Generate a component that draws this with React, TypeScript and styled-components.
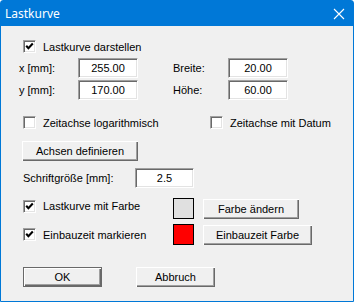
import React from 'react';
import styled, { createGlobalStyle } from 'styled-components';

const GlobalStyle = createGlobalStyle`
  html, body {
    margin: 0;
    padding: 0;
    background: #ffffff;
  }
  body {
    font-family: "Liberation Sans", Arial, sans-serif;
    font-size: 11px;
    color: #000000;
  }
`;

const Window = styled.div`
  width: 354px;
  height: 302px;
  box-sizing: border-box;
  border: 1px solid #0078d7;
  border-radius: 3px 3px 0 0;
  background: #f0f0f0;
  display: flex;
  flex-direction: column;
`;

const TitleBar = styled.div`
  height: 25px;
  flex: none;
  background: #0078d7;
  display: flex;
  align-items: center;
  justify-content: space-between;
  padding: 0 8px 0 4px;
  color: #ffffff;
  font-family: "Noto Sans", "Open Sans", sans-serif;
  font-size: 12px;
`;

const CloseIcon = () => (
  <svg width="12" height="12" viewBox="0 0 12 12">
    <path d="M1 1 L11 11 M11 1 L1 11" stroke="#ffffff" strokeWidth="1.1" fill="none" />
  </svg>
);

const Content = styled.div`
  padding: 14px 0 0 22px;
  display: flex;
  flex-direction: column;
`;

const Row = styled.div<{ $top?: number; $height?: number; $shift?: number }>`
  display: flex;
  align-items: center;
  height: ${p => p.$height ?? 20}px;
  margin-top: ${p => p.$top ?? 0}px;
  margin-left: ${p => p.$shift ?? 0}px;
`;

const CheckItem = styled.label<{ $width?: number; $lift?: number }>`
  display: flex;
  align-items: center;
  gap: 7px;
  width: ${p => (p.$width ? `${p.$width}px` : 'auto')};
  margin-top: ${p => -(p.$lift ?? 0)}px;
  white-space: nowrap;
`;

const Box = styled.span`
  width: 13px;
  height: 13px;
  box-sizing: border-box;
  flex: none;
  background: #ffffff;
  border-top: 1px solid #a0a0a0;
  border-left: 1px solid #a0a0a0;
  border-right: 1px solid #ffffff;
  border-bottom: 1px solid #ffffff;
  box-shadow: inset 1px 1px 0 #696969, inset -1px -1px 0 #e3e3e3;
  display: flex;
  align-items: center;
  justify-content: center;
`;

const Check = ({ checked }: { checked?: boolean }) => (
  <Box>
    {checked ? (
      <svg width="9" height="9" viewBox="0 0 9 9">
        <path d="M1.2 3.8 L3.4 6.2 L7.8 1.6" stroke="#000" strokeWidth="2.1" fill="none" />
      </svg>
    ) : null}
  </Box>
);

const Label = styled.span<{ $width: number }>`
  width: ${p => p.$width}px;
  flex: none;
  white-space: nowrap;
`;

const Field = styled.div<{ $width?: number }>`
  width: ${p => p.$width ?? 60}px;
  height: 20px;
  box-sizing: border-box;
  flex: none;
  background: #ffffff;
  border-top: 1px solid #a0a0a0;
  border-left: 1px solid #a0a0a0;
  border-right: 1px solid #ffffff;
  border-bottom: 1px solid #ffffff;
  box-shadow: inset 1px 1px 0 #696969, inset -1px -1px 0 #e3e3e3;
  display: flex;
  align-items: center;
  justify-content: center;
  font-size: 11px;
`;

const Spacer = styled.div<{ $width: number }>`
  width: ${p => p.$width}px;
  flex: none;
`;

const Button = styled.button<{ $width: number; $default?: boolean }>`
  width: ${p => p.$width}px;
  height: 20px;
  box-sizing: border-box;
  flex: none;
  padding: 0;
  background: #f0f0f0;
  font-family: "Liberation Sans", Arial, sans-serif;
  font-size: 11px;
  color: #000;
  border: ${p => (p.$default ? '1px solid #696969' : 'none')};
  box-shadow: inset 1px 1px 0 #ffffff, inset -1px -1px 0 #696969, inset -2px -2px 0 #a0a0a0;
  outline: none;
`;

const Swatch = styled.div<{ $color: string }>`
  width: 21px;
  height: 21px;
  box-sizing: border-box;
  flex: none;
  border: 1px solid #000;
  background: ${p => p.$color};
  margin-right: 9px;
`;

const ColorRows = styled.div`
  display: grid;
  grid-template-columns: 150px auto 1fr;
  grid-template-rows: 21px 21px;
  row-gap: 5px;
  align-items: center;
  justify-items: start;
  margin-top: 10px;
`;

export default function App() {
  return (
    <>
      <GlobalStyle />
      <Window>
        <TitleBar>
          <span>Lastkurve</span>
          <CloseIcon />
        </TitleBar>
        <Content>
          <Row $height={13}>
            <CheckItem>
              <Check checked />
              Lastkurve darstellen
            </CheckItem>
          </Row>
          <Row $top={5} $shift={-4}>
            <Label $width={59}>x [mm]:</Label>
            <Field>255.00</Field>
            <Spacer $width={35} />
            <Label $width={55}>Breite:</Label>
            <Field>20.00</Field>
          </Row>
          <Row $top={2} $shift={-4}>
            <Label $width={59}>y [mm]:</Label>
            <Field>170.00</Field>
            <Spacer $width={35} />
            <Label $width={55}>Höhe:</Label>
            <Field>60.00</Field>
          </Row>
          <Row $top={16} $height={13}>
            <CheckItem $width={187}>
              <Check />
              Zeitachse logarithmisch
            </CheckItem>
            <CheckItem>
              <Check />
              Zeitachse mit Datum
            </CheckItem>
          </Row>
          <Row $top={12} $shift={-1}>
            <Button $width={116}>Achsen definieren</Button>
          </Row>
          <Row $top={7}>
            <Label $width={112}>Schriftgröße [mm]:</Label>
            <Field $width={59}>2.5</Field>
          </Row>
          <ColorRows>
            <CheckItem $lift={5}>
              <Check checked />
              Lastkurve mit Farbe
            </CheckItem>
            <Swatch $color="#e0e0e0" />
            <Button $width={96}>Farbe ändern</Button>
            <CheckItem>
              <Check checked />
              Einbauzeit markieren
            </CheckItem>
            <Swatch $color="#ff0000" />
            <Button $width={109}>Einbauzeit Farbe</Button>
          </ColorRows>
          <Row $top={22}>
            <Button $width={79} $default>OK</Button>
            <Spacer $width={34} />
            <Button $width={79}>Abbruch</Button>
          </Row>
        </Content>
      </Window>
    </>
  );
}
